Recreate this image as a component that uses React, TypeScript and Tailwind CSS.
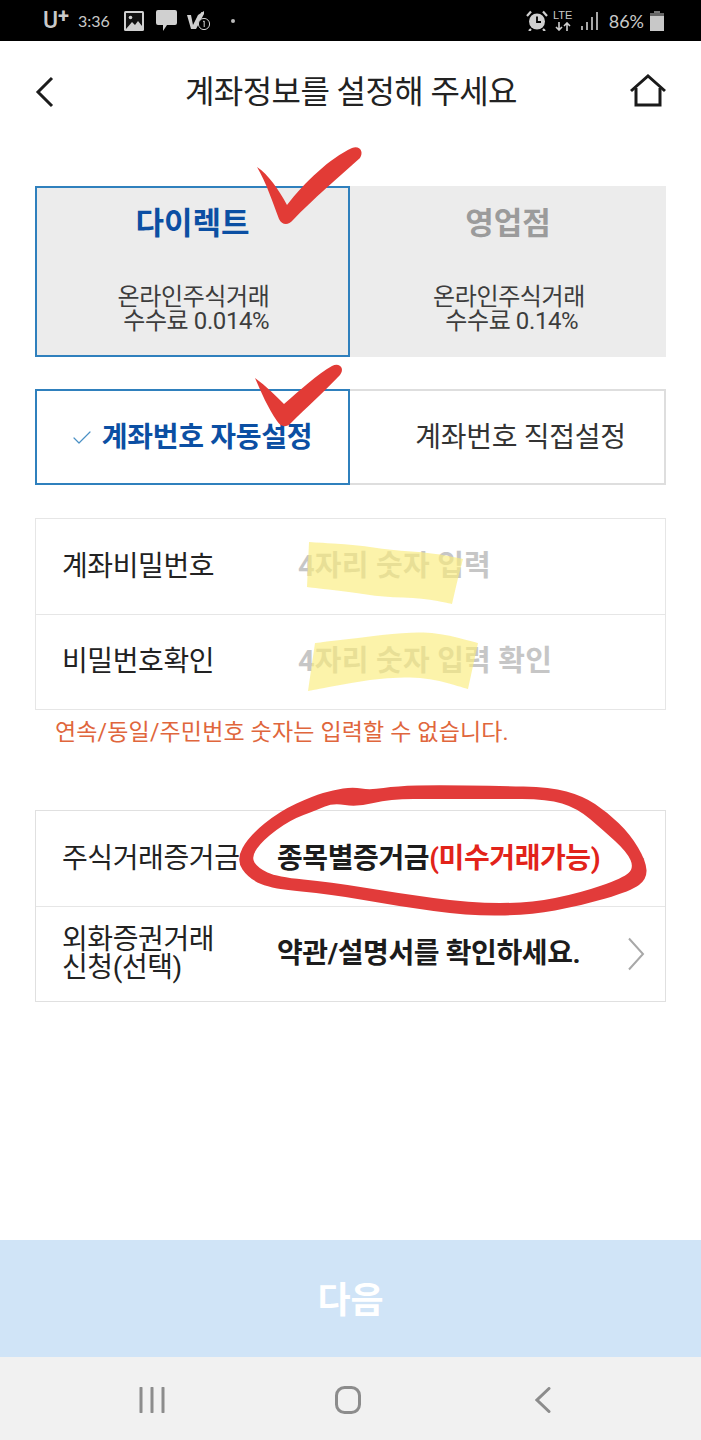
import { Check } from "lucide-react";
import type { ReactNode } from "react";

const kr = "font-['Roboto','Noto_Sans_CJK_KR',sans-serif]";

type Pt = [number, number];

// closed smooth curve through the midpoints of a hand drawn outline
function smooth(points: Pt[]) {
  const mid = (a: Pt, b: Pt) => `${(a[0] + b[0]) / 2} ${(a[1] + b[1]) / 2}`;
  const n = points.length;
  let d = `M${mid(points[n - 1], points[0])}`;
  points.forEach((p, i) => {
    d += ` Q${p[0]} ${p[1]} ${mid(p, points[(i + 1) % n])}`;
  });
  return d + " Z";
}

const ringOuter: Pt[] = [
  [333, 790], [353, 787], [370, 790], [397, 786], [437, 785], [497, 786], [550, 787], [583, 796],
  [607, 812], [630, 834], [646, 861], [647, 879], [631, 891], [580, 906], [530, 915], [470, 916],
  [397, 906], [330, 894], [273, 889], [249, 879], [236, 860], [249, 836], [280, 811], [313, 796],
];
const ringInner: Pt[] = [
  [333, 803], [357, 807], [390, 799], [437, 799], [497, 799], [547, 799], [577, 808], [603, 830],
  [627, 852], [634, 868], [623, 878], [580, 893], [530, 903], [470, 903], [397, 893], [330, 882],
  [277, 877], [258, 868], [251, 857], [263, 840], [290, 820], [317, 810],
];
// corners are listed twice so the curve stays tight there
const markerOne: Pt[] = [
  [309, 542], [309, 542], [357, 545], [390, 550], [433, 553], [463, 559], [463, 559], [458, 578], [452, 604], [452, 604],
  [423, 598], [383, 597], [350, 592], [307, 587], [307, 587],
];
const markerTwo: Pt[] = [
  [315, 643], [315, 643], [357, 638], [407, 632], [440, 633], [478, 643], [478, 643], [468, 689], [468, 689], [430, 678],
  [390, 677], [350, 683], [308, 691], [308, 691],
];

function StatusBar() {
  return (
    <div className="flex h-[41px] items-center justify-between bg-black pl-[43px] pr-[37px] text-[#c9c9c9]">
      <div className="flex items-center">
        <span className="text-[23px] font-medium leading-none">U</span>
        <span className="mb-[9px] text-[20px] font-bold leading-none">+</span>
        <span className="ml-[9px] text-[16px] leading-none font-['Lato',sans-serif]">3:36</span>
        <svg className="ml-[14px]" width="20" height="20" viewBox="0 0 20 20">
          <rect x="0" y="0" width="20" height="20" rx="1.5" fill="#d0d0d0" />
          <rect x="2" y="2" width="16" height="16" fill="#111" />
          <circle cx="6.5" cy="6.5" r="1.8" fill="#d0d0d0" />
          <path d="M2 18 L8 11 L11 14 L14 10 L18 15 V18 Z" fill="#d0d0d0" />
        </svg>
        <svg className="ml-[12px]" width="21" height="21" viewBox="0 0 21 21">
          <path d="M2 0 H19 Q21 0 21 2 V13 Q21 15 19 15 H11 L7 21 V15 H2 Q0 15 0 13 V2 Q0 0 2 0 Z" fill="#d0d0d0" />
        </svg>
        <svg className="ml-[10px]" width="24" height="20" viewBox="0 0 24 20">
          <path d="M0 4 H4 L6 14 L11 4 L17 0 V3 L9 18 H4 Z" fill="#d0d0d0" />
          <path d="M14 2 H16 M15 1 V4" stroke="#d0d0d0" strokeWidth="1" />
          <circle cx="17" cy="13" r="5.6" fill="#000" stroke="#d0d0d0" strokeWidth="1" />
          <path d="M16 10.5 L17.2 10 V16" stroke="#d0d0d0" strokeWidth="1" fill="none" />
        </svg>
        <span className="ml-[20px] h-[4px] w-[4px] rounded-full bg-[#bbb]" />
      </div>
      <div className="flex items-center">
        <svg width="22" height="21" viewBox="0 0 22 21">
          <circle cx="11" cy="11.5" r="8" fill="#d0d0d0" />
          <path d="M11 6.5 V12 H15" stroke="#000" strokeWidth="1.8" fill="none" />
          <path d="M1 6 L5 1.5 M21 6 L17 1.5 M5 19 L3 21 M17 19 L19 21" stroke="#d0d0d0" strokeWidth="2.2" />
        </svg>
        <div className="ml-[5px] flex w-[20px] flex-col items-center leading-none">
          <span className="text-[11px] font-['Liberation_Sans',sans-serif]">LTE</span>
          <svg className="mt-[1px]" width="16" height="9" viewBox="0 0 16 9" fill="none">
            <path d="M4 0 V8 M1 5 L4 8 L7 5 M12 9 V1 M9 4 L12 1 L15 4" stroke="#d0d0d0" strokeWidth="1.6" />
          </svg>
        </div>
        <svg className="ml-[8px]" width="18" height="20" viewBox="0 0 18 20">
          <path d="M1 15 V19 M6 11 V19 M11 6 V19 M16 1 V19" stroke="#c4c4c4" strokeWidth="1.7" />
        </svg>
        <span className="ml-[10px] text-[18px] leading-none font-['Lato',sans-serif]">86%</span>
        <svg className="ml-[6px]" width="14" height="20" viewBox="0 0 14 20">
          <rect x="4" y="0" width="6" height="2" fill="#777" />
          <rect x="0" y="2" width="14" height="3" fill="#666" />
          <rect x="0" y="5" width="14" height="15" fill="#c8c8c8" />
        </svg>
      </div>
    </div>
  );
}

function Header() {
  return (
    <div className="grid h-[100px] grid-cols-[1fr_auto_1fr] items-center pl-[35px] pr-[34px]">
      <svg width="20" height="32" viewBox="0 0 20 32" fill="none" className="mt-[1px]">
        <path d="M17 2 L3 16 L17 30" stroke="#1c1c1c" strokeWidth="3" />
      </svg>
      <h1 className="pt-[2px] text-[32px] font-normal tracking-[-0.6px] text-[#222]">계좌정보를 설정해 주세요</h1>
      <svg width="38" height="34" viewBox="0 0 38 34" fill="none" className="justify-self-end">
        <path d="M2 17 L19 2 L36 17" stroke="#1a1a1a" strokeWidth="3" />
        <path d="M7 14 V31 H31 V14" stroke="#1a1a1a" strokeWidth="3" />
      </svg>
    </div>
  );
}

function PlanTabs() {
  return (
    <div className="mx-[35px] mt-[45px] flex h-[171px]">
      <div className="flex w-[315px] flex-col items-center border-2 border-[#2f80bd] bg-[#ececec]">
        <div className="mt-[13px] text-[31px] font-bold text-[#0b4fa3]">다이렉트</div>
        <div className="mt-[37px] whitespace-pre pl-[2px] text-center text-[24px] leading-[24px] tracking-[-0.4px] text-[#3d3d3d]">
          {"온라인주식거래\n 수수료 0.014%"}
        </div>
      </div>
      <div className="flex w-[316px] flex-col items-center bg-[#ececec]">
        <div className="mt-[15px] text-[31px] font-bold text-[#9b9b9b]">영업점</div>
        <div className="mt-[37px] whitespace-pre pl-[2px] text-center text-[24px] leading-[24px] tracking-[-0.4px] text-[#3d3d3d]">
          {"온라인주식거래\n 수수료 0.14%"}
        </div>
      </div>
    </div>
  );
}

function AccountTabs() {
  return (
    <div className="mx-[35px] mt-[32px] flex h-[96px]">
      <div className="flex w-[315px] items-center justify-center gap-[8px] border-2 border-[#2f80bd] pr-[3px] pt-[2px]">
        <Check size={24} strokeWidth={1.2} className="text-[#4a90c4]" />
        <span className="text-[28px] font-bold tracking-[-0.3px] text-[#0b4fa3]">계좌번호 자동설정</span>
      </div>
      <div className="flex w-[316px] items-center justify-center border-2 border-l-0 border-[#dedede] pl-[27px] pt-[2px]">
        <span className="text-[28px] tracking-[-0.3px] text-[#333]">계좌번호 직접설정</span>
      </div>
    </div>
  );
}

function Row({ label, children }: { label: string; children?: ReactNode }) {
  return (
    <div className="flex h-[95px] items-center pl-[26px] [&+&]:border-t [&+&]:border-[#e6e6e6]">
      <div className="w-[236px] shrink-0 whitespace-pre text-[28px] leading-[28px] tracking-[-0.4px] text-[#222]">
        {label}
      </div>
      {children}
    </div>
  );
}

function Placeholder({ text }: { text: string }) {
  return <span className="text-[29px] font-bold tracking-[0.2px] text-[#c6c6c6]">{text}</span>;
}

function Arrow() {
  return (
    <svg width="18" height="34" viewBox="0 0 18 34" fill="none" className="ml-auto mr-[20px] shrink-0">
      <path d="M2 1.5 L16 17 L2 32.5" stroke="#a8a8a8" strokeWidth="2" />
    </svg>
  );
}

function Annotations() {
  return (
    <svg className="pointer-events-none absolute left-0 top-0" width="701" height="1440" viewBox="0 0 701 1440">
      <path d={smooth(markerOne)} fill="#fbed7c" fillOpacity="0.65" />
      <path d={smooth(markerTwo)} fill="#fbed7c" fillOpacity="0.65" />
      <path
        d="M257 167 C268 174 279 190 287 205 C305 182 330 158 352 148 C360 145 364 152 360 158 C340 176 312 200 293 220 C288 226 282 225 279 219 C273 203 266 182 257 167 Z"
        fill="#e23b36"
      />
      <path
        d="M255 378 C266 386 276 396 284 404 C300 390 318 374 332 366 C340 362 345 369 340 375 C324 392 306 408 291 423 C286 428 281 427 277 421 C268 408 261 392 255 378 Z"
        fill="#e23b36"
      />
      <path d={`${smooth(ringOuter)} ${smooth(ringInner)}`} fill="#e23b3a" fillRule="evenodd" />
    </svg>
  );
}

function NavBar() {
  return (
    <div className="flex h-[83px] items-center bg-[#f1f1f1] pt-[3px] text-[#8c8c8c]">
      <div className="flex w-[304px] justify-center">
        <svg width="26" height="26" viewBox="0 0 26 26">
          <path d="M2 1 V25 M13 1 V25 M24 1 V25" stroke="currentColor" strokeWidth="3" strokeLinecap="round" />
        </svg>
      </div>
      <div className="flex w-[88px] justify-center">
        <svg width="26" height="28" viewBox="0 0 26 28" fill="none">
          <rect x="1.5" y="1.5" width="23" height="25" rx="8" stroke="currentColor" strokeWidth="3" />
        </svg>
      </div>
      <div className="flex flex-1 justify-center pr-[8px]">
        <svg width="16" height="26" viewBox="0 0 16 26" fill="none">
          <path d="M14 1.5 L2 13 L14 24.5" stroke="currentColor" strokeWidth="3" strokeLinecap="round" />
        </svg>
      </div>
    </div>
  );
}

export default function App() {
  return (
    <div className={`relative flex h-[1440px] w-[701px] flex-col overflow-hidden bg-white ${kr}`}>
      <StatusBar />
      <Header />
      <PlanTabs />
      <AccountTabs />

      <div className="mx-[35px] mt-[33px] border border-[#e6e6e6]">
        <Row label="계좌비밀번호">
          <Placeholder text="4자리 숫자 입력" />
        </Row>
        <Row label="비밀번호확인">
          <Placeholder text="4자리 숫자 입력 확인" />
        </Row>
      </div>
      <p className="ml-[55px] mt-[8px] text-[23px] leading-[30px] tracking-[0.15px] text-[#e0663c]">
        연속/동일/주민번호 숫자는 입력할 수 없습니다.
      </p>

      <div className="mx-[35px] mt-[62px] border border-[#e0e0e0]">
        <Row label="주식거래증거금">
          <span className="-ml-[21px] whitespace-nowrap text-[28px] font-bold tracking-[-0.4px] text-[#1c1c1c]">
            종목별증거금<span className="text-[#e2231a]">(미수거래가능)</span>
          </span>
          <Arrow />
        </Row>
        <Row label={"외화증권거래\n신청(선택)"}>
          <span className="-ml-[21px] whitespace-nowrap text-[28px] font-bold tracking-[-0.4px] text-[#1c1c1c]">
            약관/설명서를 확인하세요.
          </span>
          <Arrow />
        </Row>
      </div>

      <div className="mt-auto flex h-[117px] items-center justify-center bg-[#d0e4f7] pt-[5px] text-[36px] font-bold text-white">
        다음
      </div>
      <NavBar />
      <Annotations />
    </div>
  );
}
